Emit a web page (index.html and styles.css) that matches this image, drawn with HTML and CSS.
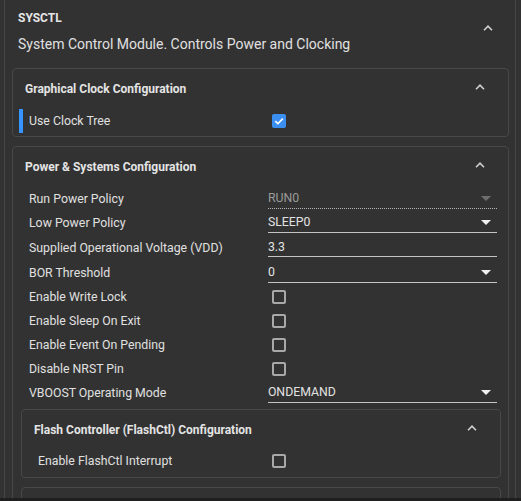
FILE: index.html
```html
<!DOCTYPE html>
<html>
<head>
<meta charset="utf-8">
<link rel="stylesheet" href="styles.css">
</head>
<body>
<div class="page">
  <div class="viewport">
    <section class="module">
      <header class="module-head">
        <div class="module-text">
          <div class="module-name">SYSCTL</div>
          <div class="module-desc">System Control Module. Controls Power and Clocking</div>
        </div>
        <svg class="chev chev-outer" width="10" height="6" viewBox="0 0 10 6"><path d="M1 5.2 L5 1.2 L9 5.2" /></svg>
      </header>
      <div class="module-body">
        <div class="card">
          <div class="card-head">
            <span class="card-title">Graphical Clock Configuration</span>
            <svg class="chev" width="10" height="6" viewBox="0 0 10 6"><path d="M1 5.2 L5 1.2 L9 5.2" /></svg>
          </div>
          <div class="row row-modified">
            <span class="label">Use Clock Tree</span>
            <span class="value"><span class="check checked"><svg width="10" height="10" viewBox="0 0 10 10"><path d="M1.3 5.2 L3.9 7.7 L8.8 2.6" /></svg></span></span>
          </div>
        </div>

        <div class="card card-power">
          <div class="card-head">
            <span class="card-title">Power &amp; Systems Configuration</span>
            <svg class="chev" width="10" height="6" viewBox="0 0 10 6"><path d="M1 5.2 L5 1.2 L9 5.2" /></svg>
          </div>
          <div class="row">
            <span class="label">Run Power Policy</span>
            <span class="value"><span class="select disabled"><span class="select-text">RUN0</span><svg class="tri" width="10" height="5" viewBox="0 0 10 5"><path d="M0 0 H10 L5 5 Z" /></svg></span></span>
          </div>
          <div class="row">
            <span class="label">Low Power Policy</span>
            <span class="value"><span class="select"><span class="select-text">SLEEP0</span><svg class="tri" width="10" height="5" viewBox="0 0 10 5"><path d="M0 0 H10 L5 5 Z" /></svg></span></span>
          </div>
          <div class="row row-input">
            <span class="label">Supplied Operational Voltage (VDD)</span>
            <span class="value"><span class="textbox">3.3</span></span>
          </div>
          <div class="row">
            <span class="label">BOR Threshold</span>
            <span class="value"><span class="select"><span class="select-text">0</span><svg class="tri" width="10" height="5" viewBox="0 0 10 5"><path d="M0 0 H10 L5 5 Z" /></svg></span></span>
          </div>
          <div class="row">
            <span class="label">Enable Write Lock</span>
            <span class="value"><span class="check"></span></span>
          </div>
          <div class="row">
            <span class="label">Enable Sleep On Exit</span>
            <span class="value"><span class="check"></span></span>
          </div>
          <div class="row">
            <span class="label">Enable Event On Pending</span>
            <span class="value"><span class="check"></span></span>
          </div>
          <div class="row">
            <span class="label">Disable NRST Pin</span>
            <span class="value"><span class="check"></span></span>
          </div>
          <div class="row">
            <span class="label">VBOOST Operating Mode</span>
            <span class="value"><span class="select"><span class="select-text">ONDEMAND</span><svg class="tri" width="10" height="5" viewBox="0 0 10 5"><path d="M0 0 H10 L5 5 Z" /></svg></span></span>
          </div>

          <div class="card card-sub">
            <div class="card-head">
              <span class="card-title">Flash Controller (FlashCtl) Configuration</span>
              <svg class="chev" width="10" height="6" viewBox="0 0 10 6"><path d="M1 5.2 L5 1.2 L9 5.2" /></svg>
            </div>
            <div class="row row-sub">
              <span class="label">Enable FlashCtl Interrupt</span>
              <span class="value"><span class="check"></span></span>
            </div>
          </div>
          <div class="card card-sub card-next"></div>
        </div>
      </div>
    </section>
  </div>
  <div class="statusbar"></div>
</div>
</body>
</html>
```

FILE: styles.css
```css
html, body {
  margin: 0;
  padding: 0;
  background: #323232;
}
body {
  font-family: Roboto, "Liberation Sans", Arial, sans-serif;
  color: #dcdcdc;
  font-size: 12px;
}
.page {
  display: flex;
  flex-direction: column;
  height: 501px;
  width: 521px;
  overflow: hidden;
}
.viewport {
  flex: 1;
  overflow: hidden;
}
.statusbar {
  height: 3px;
  background: #1f1f1f;
}
.module {
  margin-left: 4px;
  width: 510px;
  border-left: 1px solid #464646;
  border-right: 1px solid #464646;
  min-height: 600px;
}
.module-head {
  display: flex;
  align-items: center;
  height: 56px;
  padding-left: 13px;
  box-sizing: border-box;
}
.module-text {
  flex: 1;
  padding-top: 8px;
}
.module-name {
  font-weight: 700;
  font-size: 12px;
  line-height: 16px;
  color: #e6e6e6;
}
.module-desc {
  margin-top: 8px;
  font-size: 14px;
  line-height: 20px;
  color: #e0e0e0;
}
.chev {
  flex: none;
  margin-right: 23px;
}
.chev path {
  fill: none;
  stroke: #d0d0d0;
  stroke-width: 1.6;
}
.chev-outer {
  margin-right: 22px;
}
.module-body {
  padding: 12px 6px 0 7px;
}
.card {
  border: 1px solid #484848;
  border-radius: 4px;
  padding-bottom: 3px;
}
.card + .card {
  margin-top: 9px;
}
.card-head {
  display: flex;
  align-items: center;
  height: 40px;
  padding-left: 12px;
}
.card-head .chev {
  margin-top: -5px;
}
.card-title {
  flex: 1;
  font-weight: 700;
  font-size: 12px;
  color: #e4e4e4;
}
.row {
  display: grid;
  grid-template-columns: 51.05% 1fr;
  align-items: center;
  height: 24px;
  padding-left: 16px;
  padding-right: 11px;
}
.row-modified {
  margin-left: 6px;
  border-left: 4px solid #3794ff;
  padding-left: 6px;
}
.row-input {
  height: 26px;
}
.label {
  white-space: nowrap;
  font-size: 12.3px;
  color: #e0e0e0;
}
.value {
  align-self: stretch;
  display: flex;
  align-items: center;
}
.check {
  box-sizing: border-box;
  width: 14px;
  height: 14px;
  margin-left: 4px;
  border: 2px solid #a8a8a8;
  border-radius: 2px;
  display: flex;
  align-items: center;
  justify-content: center;
}
.check.checked {
  background: #3a8ff0;
  border-color: #3a8ff0;
  margin-top: -1px;
}
.check svg path {
  fill: none;
  stroke: #ffffff;
  stroke-width: 1.6;
}
.select, .textbox {
  align-self: flex-start;
  flex: 1;
  box-sizing: border-box;
  height: 22px;
  display: flex;
  align-items: center;
  border-bottom: 1px solid #c4c4c4;
  font-size: 12.3px;
  color: #e2e2e2;
}
.select-text {
  flex: 1;
}
.tri {
  margin-right: 6px;
  margin-top: 2px;
}
.tri path {
  fill: #f0f0f0;
}
.select.disabled {
  border-bottom: 1px dotted #b4b4b4;
  color: #9a9a9a;
}
.select.disabled .tri path {
  fill: #6e6e6e;
}
.textbox {
  padding-top: 3px;
}
.card-sub {
  margin: 4px 7px 0 8px;
  padding-bottom: 5px;
}
.card-power .card-sub + .card-sub {
  margin-top: 9px;
}
.row-sub {
  height: 22px;
}
.card-next {
  height: 40px;
}
```
